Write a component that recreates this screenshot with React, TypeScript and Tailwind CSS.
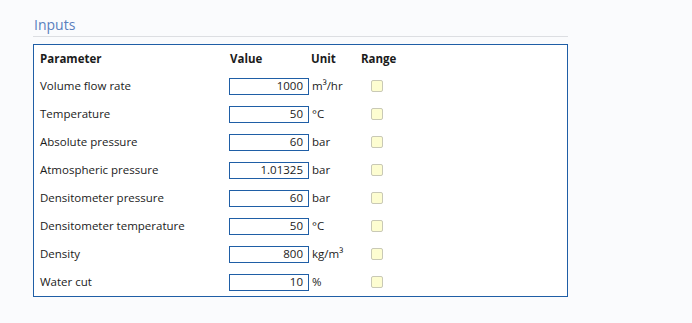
import React from "react";

const rows = [
  { name: "Volume flow rate", value: "1000", unit: "m³/hr" },
  { name: "Temperature", value: "50", unit: "°C" },
  { name: "Absolute pressure", value: "60", unit: "bar" },
  { name: "Atmospheric pressure", value: "1.01325", unit: "bar" },
  { name: "Densitometer pressure", value: "60", unit: "bar" },
  { name: "Densitometer temperature", value: "50", unit: "°C" },
  { name: "Density", value: "800", unit: "kg/m³" },
  { name: "Water cut", value: "10", unit: "%" },
];

export default function App() {
  return (
    <div
      className="w-[692px] h-[323px] bg-[#fafbfd] text-[#1b1b1b] pl-[33px] pt-[16px]"
      style={{ fontFamily: '"Open Sans", "Noto Sans", sans-serif' }}
    >
      <div className="w-[535px]">
        <div className="text-[14px] leading-[18px] text-[#5a7fbd] pl-[1px]">Inputs</div>
        <div className="h-[1px] bg-[#dcdee2] mt-[2px]" />
        <div className="mt-[7px] border border-[#1f5ea6] bg-white">
          <div className="flex items-center h-[27px] pl-[6px] text-[11.5px] font-bold">
            <div className="w-[190px]">Parameter</div>
            <div className="w-[81px]">Value</div>
            <div className="w-[50px]">Unit</div>
            <div>Range</div>
          </div>
          {rows.map((r) => (
            <div key={r.name} className="flex items-center h-[28px] pl-[6px] text-[11.5px]">
              <div className="w-[189px]">{r.name}</div>
              <div className="w-[80px] h-[17px] border-[1.5px] border-[#1f5ea6] bg-white flex items-center justify-end pr-[5px] leading-none">
                {r.value}
              </div>
              <div className="w-[48px] pl-[3px]">{r.unit}</div>
              <div className="w-[36px] pl-[14px]">
                <div className="w-[12px] h-[12px] rounded-[2px] border border-[#c9c9b6] bg-[#fdfdd1]" />
              </div>
            </div>
          ))}
        </div>
      </div>
    </div>
  );
}
